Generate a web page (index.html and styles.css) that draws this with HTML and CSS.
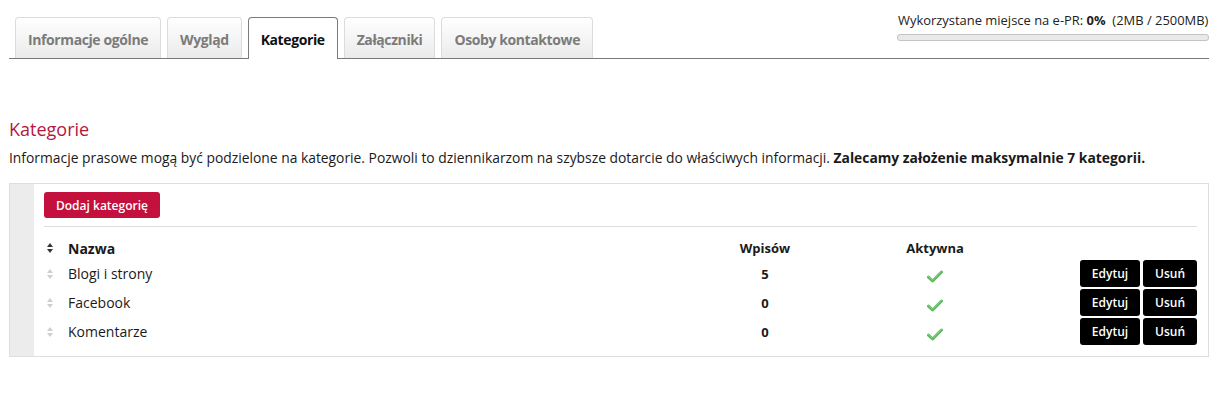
FILE: index.html
```html
<!DOCTYPE html>
<html lang="pl">
<head>
  <meta charset="UTF-8" />
  <title>Kategorie</title>
  <link rel="stylesheet" href="styles.css">
</head>
<body>
  <div class="page">
    <div class="topbar">
      <ul class="tabs">
        <li class="tab">Informacje ogólne</li>
        <li class="tab">Wygląd</li>
        <li class="tab active">Kategorie</li>
        <li class="tab">Załączniki</li>
        <li class="tab">Osoby kontaktowe</li>
      </ul>
      <div class="usage">
        <div class="usage-text">Wykorzystane miejsce na e-PR: <b>0%</b>&nbsp; (2MB / 2500MB)</div>
        <div class="usage-bar"><div class="usage-fill" style="width: 0%"></div></div>
      </div>
    </div>

    <h2 class="title">Kategorie</h2>
    <p class="intro">Informacje prasowe mogą być podzielone na kategorie. Pozwoli to dziennikarzom na szybsze dotarcie do właściwych informacji. <b>Zalecamy założenie maksymalnie 7 kategorii.</b></p>

    <div class="panel">
      <div class="panel-side"></div>
      <div class="panel-body">
        <div class="toolbar">
          <button class="btn-add">Dodaj kategorię</button>
        </div>
        <div class="grid">
          <div class="row head">
            <span class="sort dark"></span>
            <span class="name">Nazwa</span>
            <span class="num">Wpisów</span>
            <span class="active-col">Aktywna</span>
            <span></span>
          </div>
          <div class="row">
            <span class="sort"></span>
            <span class="name">Blogi i strony</span>
            <span class="num">5</span>
            <span class="active-col"><svg class="check" width="16" height="13" viewBox="0 0 16 13"><path d="M1.5 7.2 L5.6 11 L14.5 2" fill="none" stroke="#5cb85c" stroke-width="3" stroke-linecap="round" stroke-linejoin="round"/><path d="M1.5 7.2 L5.6 11 L14.5 2" fill="none" stroke="#8fd48f" stroke-width="1" stroke-linecap="round" stroke-linejoin="round" transform="translate(0 -0.8)"/></svg></span>
            <span class="actions"><button class="btn">Edytuj</button><button class="btn">Usuń</button></span>
          </div>
          <div class="row">
            <span class="sort"></span>
            <span class="name">Facebook</span>
            <span class="num">0</span>
            <span class="active-col"><svg class="check" width="16" height="13" viewBox="0 0 16 13"><path d="M1.5 7.2 L5.6 11 L14.5 2" fill="none" stroke="#5cb85c" stroke-width="3" stroke-linecap="round" stroke-linejoin="round"/><path d="M1.5 7.2 L5.6 11 L14.5 2" fill="none" stroke="#8fd48f" stroke-width="1" stroke-linecap="round" stroke-linejoin="round" transform="translate(0 -0.8)"/></svg></span>
            <span class="actions"><button class="btn">Edytuj</button><button class="btn">Usuń</button></span>
          </div>
          <div class="row">
            <span class="sort"></span>
            <span class="name">Komentarze</span>
            <span class="num">0</span>
            <span class="active-col"><svg class="check" width="16" height="13" viewBox="0 0 16 13"><path d="M1.5 7.2 L5.6 11 L14.5 2" fill="none" stroke="#5cb85c" stroke-width="3" stroke-linecap="round" stroke-linejoin="round"/><path d="M1.5 7.2 L5.6 11 L14.5 2" fill="none" stroke="#8fd48f" stroke-width="1" stroke-linecap="round" stroke-linejoin="round" transform="translate(0 -0.8)"/></svg></span>
            <span class="actions"><button class="btn">Edytuj</button><button class="btn">Usuń</button></span>
          </div>
        </div>
      </div>
    </div>
  </div>
</body>
</html>
```

FILE: styles.css
```css
body {
  margin: 0;
  font-family: 'Open Sans', sans-serif;
  color: #1a1a1a;
  background: #fff;
}

.page {
  width: 1200px;
  margin-left: 9px;
}

.topbar {
  display: flex;
  justify-content: space-between;
  border-bottom: 1px solid #7a7a7a;
  height: 58px;
}

.tabs {
  list-style: none;
  margin: 0;
  padding: 17px 0 0 6px;
  display: flex;
  gap: 6px;
}

.tab {
  height: 41px;
  box-sizing: border-box;
  padding: 0 12px;
  line-height: 44px;
  font-family: 'Open Sans', sans-serif;
  font-weight: bold;
  font-size: 14px;
  letter-spacing: -0.4px;
  color: #7b7b7b;
  border: 1px solid #dcdcdc;
  border-bottom: none;
  border-radius: 4px 4px 0 0;
  background: linear-gradient(#ffffff, #ebebeb);
}

.tab.active {
  background: #fff;
  color: #111;
  border-color: #7a7a7a;
  height: 42px;
  margin-bottom: -1px;
}

.usage {
  width: 312px;
  padding-top: 11px;
}

.usage-text {
  font-size: 12.95px;
  color: #222;
  padding-left: 1px;
  white-space: nowrap;
}

.usage-bar {
  margin-top: 5px;
  height: 5px;
  border: 1px solid #c4c4c4;
  border-radius: 3px;
  background: #e9e9e9;
}

.title {
  margin: 58px 0 0;
  font-size: 18px;
  font-weight: normal;
  color: #b3183f;
  line-height: 24px;
}

.intro {
  margin: 7px 0 0;
  font-size: 13.85px;
  line-height: 19px;
  color: #1a1a1a;
}

.panel {
  margin-top: 16px;
  display: flex;
  border: 1px solid #dedede;
}

.panel-side {
  width: 24px;
  background: #ececec;
}

.panel-body {
  flex: 1;
  padding: 8px 11px 10px 10px;
}

.toolbar {
  padding-bottom: 8px;
  border-bottom: 1px solid #dedede;
}

.btn-add {
  height: 26px;
  padding: 0 12px;
  border: none;
  border-radius: 3px;
  background: #c3103d;
  color: #fff;
  font-family: 'Open Sans', sans-serif;
  font-weight: 600;
  font-size: 12px;
}

.grid {
  padding-top: 10px;
}

.row {
  display: grid;
  grid-template-columns: 24px 1fr 80px 260px 132px;
  align-items: center;
  height: 29px;
  font-size: 14px;
}

.row.head {
  height: 22px;
  font-weight: bold;
}

.row.head .num,
.row.head .active-col {
  font-size: 13px;
}

.num {
  text-align: center;
  font-weight: bold;
  font-size: 13px;
}

.active-col {
  text-align: center;
}

.check {
  display: inline-block;
  vertical-align: middle;
  margin-top: 3px;
}

.actions {
  display: flex;
  justify-content: flex-end;
  gap: 3px;
}

.btn {
  height: 27px;
  border: none;
  border-radius: 3px;
  background: #000;
  color: #fff;
  font-family: 'Open Sans', sans-serif;
  font-weight: 600;
  font-size: 12px;
  padding: 0;
  width: 60px;
}

.btn + .btn {
  width: 54px;
}

.sort {
  position: relative;
  width: 7px;
  height: 10px;
  margin-left: 3px;
}

.sort::before,
.sort::after {
  content: '';
  position: absolute;
  left: 0;
  border-left: 3.5px solid transparent;
  border-right: 3.5px solid transparent;
}

.sort::before {
  top: 0;
  border-bottom: 4px solid #cfcfcf;
}

.sort::after {
  bottom: 0;
  border-top: 4px solid #cfcfcf;
}

.sort.dark::before {
  border-bottom-color: #333;
}

.sort.dark::after {
  border-top-color: #333;
}
```
